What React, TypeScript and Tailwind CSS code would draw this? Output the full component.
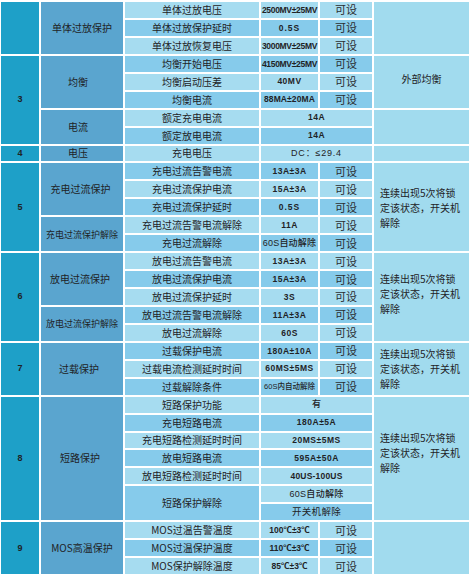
import React from "react";

const RS = [
  "row-start-1", "row-start-2", "row-start-3", "row-start-4", "row-start-5", "row-start-6", "row-start-7", "row-start-8",
  "row-start-9", "row-start-10", "row-start-11", "row-start-12", "row-start-13", "row-start-14", "row-start-15", "row-start-16",
  "row-start-17", "row-start-18", "row-start-19", "row-start-20", "row-start-21", "row-start-22", "row-start-23", "row-start-24",
  "row-start-25", "row-start-26", "row-start-27", "row-start-28", "row-start-29", "row-start-30", "row-start-31", "row-start-32",
];

const LIGHT = "bg-[#a6dcf0]";
const DARK = "bg-[#86cbeb]";

type Row = {
  l?: string;
  lSpan?: boolean;
  v: string;
  s?: boolean;
  vc?: string;
};

const B = "font-bold text-[8.5px] tracking-[0.5px]";

const rows: Row[] = [
  { l: "单体过放电压", v: "2500MV±25MV", s: true, vc: "font-bold text-[8.5px] tracking-[-0.3px]" },
  { l: "单体过放保护延时", v: "0.5S", s: true, vc: "font-bold text-[8.5px] tracking-[1px]" },
  { l: "单体过放恢复电压", v: "3000MV±25MV", s: true, vc: "font-bold text-[8.5px] tracking-[-0.3px]" },
  { l: "均衡开始电压", v: "4150MV±25MV", s: true, vc: "font-bold text-[8.5px] tracking-[-0.3px]" },
  { l: "均衡启动压差", v: "40MV", s: true },
  { l: "均衡电流", v: "88MA±20MA", s: true, vc: "font-bold text-[8.5px] tracking-[0.1px]" },
  { l: "额定充电电流", v: "14A" },
  { l: "额定放电电流", v: "14A" },
  { l: "充电电压", v: "DC：≤29.4", vc: "font-normal text-[9px] tracking-[0.8px]" },
  { l: "充电过流告警电流", v: "13A±3A", s: true },
  { l: "充电过流保护电流", v: "15A±3A", s: true },
  { l: "充电过流保护延时", v: "0.5S", s: true, vc: "font-bold text-[8.5px] tracking-[1px]" },
  { l: "充电过流告警电流解除", v: "11A", s: true },
  { l: "充电过流解除", v: "60S自动解除", s: true, vc: "font-medium text-[9px] tracking-[0.2px]" },
  { l: "放电过流告警电流", v: "13A±3A", s: true },
  { l: "放电过流保护电流", v: "15A±3A", s: true },
  { l: "放电过流保护延时", v: "3S", s: true },
  { l: "放电过流告警电流解除", v: "11A±3A", s: true },
  { l: "放电过流解除", v: "60S", s: true },
  { l: "过载保护电流", v: "180A±10A", s: true },
  { l: "过载电流检测延时时间", v: "60MS±5MS", s: true },
  { l: "过载解除条件", v: "60S内自动解除", s: true, vc: "font-medium text-[7.5px] tracking-[0px]" },
  { l: "短路保护功能", v: "有", vc: "font-medium text-[9px]" },
  { l: "充电短路电流", v: "180A±5A" },
  { l: "充电短路检测延时时间", v: "20MS±5MS" },
  { l: "放电短路电流", v: "595A±50A" },
  { l: "放电短路检测延时时间", v: "40US-100US", vc: "font-bold text-[8.5px] tracking-[0.2px]" },
  { l: "短路保护解除", lSpan: true, v: "60S自动解除", vc: "font-medium text-[9px] tracking-[0.3px]" },
  { v: "开关机解除", vc: "font-normal text-[9.5px] tracking-[0.3px]" },
  { l: "MOS过温告警温度", v: "100℃±3℃", s: true, vc: "font-bold text-[8.5px] tracking-[0px]" },
  { l: "MOS过温保护温度", v: "110℃±3℃", s: true, vc: "font-bold text-[8.5px] tracking-[0px]" },
  { l: "MOS保护解除温度", v: "85℃±3℃", s: true, vc: "font-bold text-[8.5px] tracking-[0px]" },
];

const labelBg = (i: number) => {
  if (i >= 27) {
    if (i <= 28) return DARK;
    return i % 2 === 1 ? LIGHT : DARK;
  }
  return i % 2 === 0 ? LIGHT : DARK;
};

const valueBg = (i: number) => {
  if (i >= 27) return i % 2 === 1 ? LIGHT : DARK;
  return i % 2 === 0 ? LIGHT : DARK;
};

const CJK = "font-['Noto_Sans_CJK_SC','Noto_Sans',sans-serif]";
const VAL = "font-['Liberation_Sans','Noto_Sans_CJK_SC',sans-serif]";
const NUM = `bg-[#1ea0c8] flex items-center justify-center text-[9px] font-bold ${VAL}`;
const CAT = "bg-[#5aa5cf] flex items-center justify-center";
const NOTE = "bg-[#a1dbee] flex items-center pl-[6px] pr-[6px] text-[10px] leading-[15px]";

const LOCK = "连续出现5次将锁定该状态，开关机解除";

export default function App() {
  return (
    <div className="w-[470px] h-[576px] bg-white pt-[2px] pl-[1px] overflow-hidden">
      <div
        className={`grid grid-cols-[38px_82px_134px_57px_52px_95px] grid-rows-[repeat(32,1fr)] gap-[2px] h-[572px] text-[#1f2326] leading-none ${CJK}`}
      >
        {/* Column 1: numbers */}
        <div className="col-start-1 row-start-1 row-span-3 bg-[#1ea0c8]" />
        <div className={`col-start-1 row-start-4 row-span-5 ${NUM}`}>3</div>
        <div className={`col-start-1 row-start-9 row-span-1 ${NUM}`}>4</div>
        <div className={`col-start-1 row-start-10 row-span-5 ${NUM}`}>5</div>
        <div className={`col-start-1 row-start-15 row-span-5 ${NUM}`}>6</div>
        <div className={`col-start-1 row-start-20 row-span-3 ${NUM}`}>7</div>
        <div className={`col-start-1 row-start-23 row-span-7 ${NUM}`}>8</div>
        <div className={`col-start-1 row-start-30 row-span-3 ${NUM}`}>9</div>

        {/* Column 2: categories */}
        <div className={`col-start-2 row-start-1 row-span-3 ${CAT} text-[10px]`}>单体过放保护</div>
        <div className={`col-start-2 row-start-4 row-span-3 ${CAT} text-[10px] pr-[8px]`}>均衡</div>
        <div className={`col-start-2 row-start-7 row-span-2 ${CAT} text-[10px] pr-[8px]`}>电流</div>
        <div className={`col-start-2 row-start-9 row-span-1 ${CAT} text-[10px] pr-[8px]`}>电压</div>
        <div className={`col-start-2 row-start-10 row-span-3 ${CAT} text-[10px] pr-[3px]`}>充电过流保护</div>
        <div className={`col-start-2 row-start-13 row-span-2 ${CAT} text-[9px]`}>充电过流保护解除</div>
        <div className={`col-start-2 row-start-15 row-span-3 ${CAT} text-[10px] pr-[4px]`}>放电过流保护</div>
        <div className={`col-start-2 row-start-18 row-span-2 ${CAT} text-[9px]`}>放电过流保护解除</div>
        <div className={`col-start-2 row-start-20 row-span-3 ${CAT} text-[10px] pr-[6px]`}>过载保护</div>
        <div className={`col-start-2 row-start-23 row-span-7 ${CAT} text-[10px] pr-[4px]`}>短路保护</div>
        <div className={`col-start-2 row-start-30 row-span-3 ${CAT} text-[10px]`}>MOS高温保护</div>

        {/* Columns 3-5: rows */}
        {rows.map((r, i) => (
          <React.Fragment key={i}>
            {r.l !== undefined && (
              <div
                className={`col-start-3 ${RS[i]} ${r.lSpan ? "row-span-2" : "row-span-1"} ${labelBg(i)} flex items-center justify-center text-[10px] whitespace-nowrap`}
              >
                {r.l}
              </div>
            )}
            <div
              className={`col-start-4 ${RS[i]} row-span-1 ${r.s ? "col-span-1" : "col-span-2"} ${valueBg(i)} flex items-center justify-center whitespace-nowrap ${VAL} ${r.vc ?? B}`}
            >
              {r.v}
            </div>
            {r.s && (
              <div className={`col-start-5 ${RS[i]} row-span-1 ${valueBg(i)} flex items-center justify-center text-[11px] text-[#2a2d30]`}>
                可设
              </div>
            )}
          </React.Fragment>
        ))}

        {/* Column 6: remarks */}
        <div className="col-start-6 row-start-1 row-span-3 bg-[#a1dbee]" />
        <div className="col-start-6 row-start-4 row-span-3 bg-[#a1dbee] flex items-center justify-center text-[10px] pb-[5px]">外部均衡</div>
        <div className="col-start-6 row-start-7 row-span-2 bg-[#a1dbee]" />
        <div className="col-start-6 row-start-9 row-span-1 bg-[#a1dbee]" />
        <div className={`col-start-6 row-start-10 row-span-5 ${NOTE}`}>{LOCK}</div>
        <div className={`col-start-6 row-start-15 row-span-5 ${NOTE} pb-[7px]`}>{LOCK}</div>
        <div className={`col-start-6 row-start-20 row-span-3 ${NOTE}`}>{LOCK}</div>
        <div className={`col-start-6 row-start-23 row-span-7 ${NOTE} pb-[12px]`}>{LOCK}</div>
        <div className="col-start-6 row-start-30 row-span-3 bg-[#a1dbee]" />
      </div>
    </div>
  );
}
